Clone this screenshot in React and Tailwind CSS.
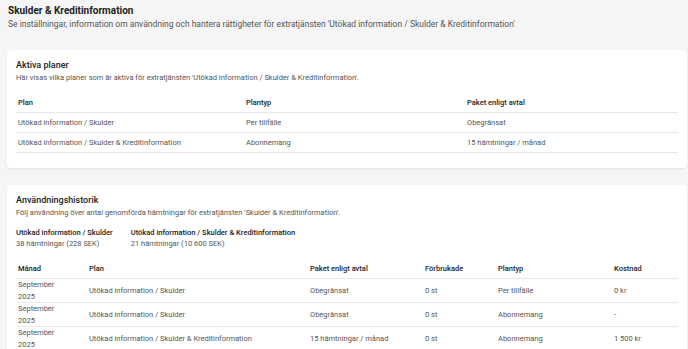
import React from "react";

const activePlans = [
    { plan: "Utökad information / Skulder", type: "Per tillfälle", pkg: "Obegränsat" },
    { plan: "Utökad information / Skulder & Kreditinformation", type: "Abonnemang", pkg: "15 hämtningar / månad" },
];

const history = [
    { plan: "Utökad information / Skulder", pkg: "Obegränsat", used: "0 st", type: "Per tillfälle", cost: "0 kr" },
    { plan: "Utökad information / Skulder", pkg: "Obegränsat", used: "0 st", type: "Abonnemang", cost: "-" },
    { plan: "Utökad information / Skulder & Kreditinformation", pkg: "15 hämtningar / månad", used: "0 st", type: "Abonnemang", cost: "1 500 kr" },
];

const App = () => {
    return (
        <div className="min-h-screen bg-[#f5f5f5] pl-[7px] pr-[1px] pt-[5px] font-['Roboto',sans-serif]">
            <h1 className="pl-[1px] text-[10px] font-bold leading-[12px] text-[#222]">Skulder &amp; Kreditinformation</h1>
            <p className="mt-[1px] pl-[1px] text-[8.5px] leading-[12px] text-[#555]">
                Se inställningar, information om användning och hantera rättigheter för extratjänsten 'Utökad information / Skulder &amp; Kreditinformation'
            </p>

            {/* Aktiva planer */}
            <div className="mt-[20px] rounded-[4px] bg-white px-[9px] pt-[9px] pb-[15px] shadow-[0_1px_2px_rgba(0,0,0,0.08)]">
                <h2 className="text-[9px] font-medium leading-[12px] text-[#222]">Aktiva planer</h2>
                <p className="mt-[1px] text-[7.5px] leading-[11px] text-[#555]">
                    Här visas vilka planer som är aktiva för extratjänsten 'Utökad information / Skulder &amp; Kreditinformation'.
                </p>
                <div className="mt-[10px] text-[7.5px]">
                    <div className="grid h-[20px] grid-cols-[228px_221px_1fr] items-center border-b border-[#e8e8e8] pl-[2px] font-medium text-[#222]">
                        <div>Plan</div>
                        <div>Plantyp</div>
                        <div>Paket enligt avtal</div>
                    </div>
                    {activePlans.map((row, i) => (
                        <div key={i} className="grid h-[20px] grid-cols-[228px_221px_1fr] items-center border-b border-[#e8e8e8] pl-[2px] text-[#555]">
                            <div>{row.plan}</div>
                            <div>{row.type}</div>
                            <div>{row.pkg}</div>
                        </div>
                    ))}
                </div>
            </div>

            {/* Användningshistorik */}
            <div className="mt-[17px] rounded-[4px] bg-white px-[9px] pt-[9px] pb-[14px] shadow-[0_1px_2px_rgba(0,0,0,0.08)]">
                <h2 className="text-[9px] font-medium leading-[12px] text-[#222]">Användningshistorik</h2>
                <p className="mt-[1px] text-[7.5px] leading-[11px] text-[#555]">
                    Följ användning över antal genomförda hämtningar för extratjänsten 'Skulder &amp; Kreditinformation'.
                </p>
                <div className="mt-[9px] flex gap-[18px] text-[7.5px] leading-[11px]">
                    <div>
                        <div className="font-medium text-[#222]">Utökad information / Skulder</div>
                        <div className="text-[#555]">38 hämtningar (228 SEK)</div>
                    </div>
                    <div>
                        <div className="font-medium text-[#222]">Utökad information / Skulder &amp; Kreditinformation</div>
                        <div className="text-[#555]">21 hämtningar (10 600 SEK)</div>
                    </div>
                </div>
                <div className="mt-[10px] text-[7.5px]">
                    <div className="grid h-[20px] grid-cols-[71px_221px_115px_73px_116px_1fr] items-center border-b border-[#e8e8e8] pl-[2px] font-medium text-[#222]">
                        <div>Månad</div>
                        <div>Plan</div>
                        <div>Paket enligt avtal</div>
                        <div>Förbrukade</div>
                        <div>Plantyp</div>
                        <div>Kostnad</div>
                    </div>
                    {history.map((row, i) => (
                        <div key={i} className="grid h-[24px] grid-cols-[71px_221px_115px_73px_116px_1fr] items-center border-b border-[#e8e8e8] pl-[2px] leading-[11.5px] text-[#555]">
                            <div>September<br />2025</div>
                            <div>{row.plan}</div>
                            <div>{row.pkg}</div>
                            <div>{row.used}</div>
                            <div>{row.type}</div>
                            <div>{row.cost}</div>
                        </div>
                    ))}
                </div>
            </div>
        </div>
    );
};

export default App;
